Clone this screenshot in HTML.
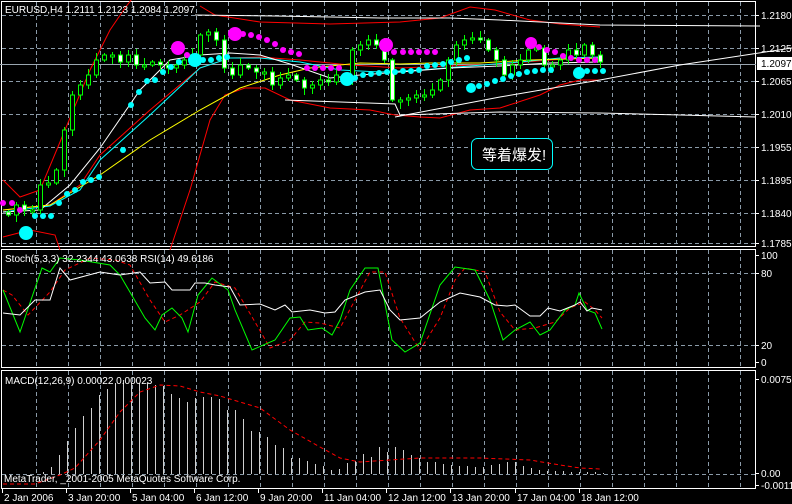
<!DOCTYPE html>
<html><head><meta charset="utf-8"><style>
html,body{margin:0;padding:0;background:#000;width:792px;height:504px;overflow:hidden}
svg{display:block}
text{font-family:"Liberation Sans","Noto Sans CJK SC",sans-serif;font-size:10px;fill:#fff}
</style></head><body>
<svg id="s" width="792" height="504" viewBox="0 0 792 504" xmlns="http://www.w3.org/2000/svg">
<rect width="792" height="504" fill="#000"/>
<g id="grid" stroke="#8a9aa8" stroke-width="1" stroke-dasharray="4,3"></g>
<g fill="none" stroke="#fff" stroke-width="1">
<rect x="1.5" y="1.5" width="754" height="245"/>
<rect x="1.5" y="249.5" width="754" height="118"/>
<rect x="1.5" y="370.5" width="754" height="118"/>
</g>
<line x1="0" y1="64.5" x2="756" y2="64.5" stroke="#9aa6b0"/>
<g fill="none" stroke="#f00" stroke-width="1">
<polyline points="3,180 20,197 40,190 65,130 90,70 110,30 125,8 135,-5"/>
<polyline points="200,6 215,15 260,22 330,24 400,22 440,18 470,7 495,10 530,20 560,24 600,27"/>
<polyline points="3,237 30,230 55,235 60,250"/>
<polyline points="170,250 190,190 210,120 225,95 245,88 265,88 290,100 330,108 370,110 395,115 420,117 440,118 470,110 500,108 540,95 560,85 580,80 600,80"/>
<polyline points="3,210 50,205 80,185 100,155 150,110 200,68 230,58 260,57 300,60 350,65 400,68 450,66 500,64 550,60 600,57"/>
</g>
<g fill="none" stroke-width="1">
<polyline stroke="#0ff" points="3,212 50,206 80,190 100,160 150,115 200,68 230,58 260,58 300,62 340,70 380,72 420,70 470,66 520,62 560,58 600,57"/>
<polyline stroke="#fff" points="3,212 40,210 70,185 100,148 140,90 170,60 200,55 230,53 260,55 290,64 330,78 360,75 400,72 450,68 500,66 550,63 600,62"/>
<polyline stroke="#ff0" points="3,210 50,205 100,175 150,140 200,110 240,88 280,75 310,68 360,63 400,64 430,63 480,63 530,60 600,58"/>
<polyline stroke="#fff" points="195,15 275,16 330,17 380,18 450,18 500,20 560,23 600,25 760,26"/>
<polyline stroke="#fff" points="285,100 395,104 400,115 500,112 600,113 680,115 756,117"/>
<polyline stroke="#fff" points="395,117 500,97 600,80 680,65 792,48"/>
</g>
<g id="candles"></g>
<g id="dots"></g>
<rect x="471.5" y="138.5" width="81" height="31" rx="6" fill="#000" stroke="#0ff"/>
<text x="482" y="160" style="font-size:15px">等着爆发!</text>
<g fill="none" stroke-width="1">
<polyline stroke="#f00" stroke-dasharray="4,3" points="3,290 12,295 28,315 50,292 65,270 90,258 115,260 130,265 150,300 165,322 180,315 200,302 215,282 235,288 255,322 270,348 290,340 305,322 320,323 340,328 355,300 370,272 385,272 400,318 420,350 440,318 455,280 465,268 485,272 500,312 515,330 535,328 555,322 570,308 585,302 595,310 602,318"/>
<polyline stroke="#0f0" points="3,290 20,332 42,268 50,272 60,258 80,260 110,265 120,275 145,318 155,330 162,315 172,308 182,318 188,332 198,295 212,278 228,290 235,310 252,350 275,340 290,318 300,317 308,330 322,328 332,335 340,320 350,290 365,268 378,268 392,340 405,352 420,343 440,285 455,267 475,270 490,300 503,340 515,330 530,322 540,335 550,330 565,310 575,305 579,293 587,310 595,313 602,329"/>
<polyline stroke="#fff" points="3,313 20,315 35,300 50,300 60,268 70,280 100,272 120,275 140,272 150,283 165,282 172,290 190,290 195,283 205,283 215,285 230,287 240,305 260,304 275,310 285,305 292,312 310,310 325,313 335,312 345,300 365,292 380,290 390,310 400,320 420,318 440,302 460,293 480,297 495,305 507,306 515,305 530,316 540,316 548,308 560,311 575,305 580,302 587,311 592,308 602,310"/>
</g>
<g id="macd" stroke="#d0d0d0" stroke-width="1"></g>
<polyline fill="none" stroke="#f00" stroke-dasharray="4,3" points="3,484 35,484 60,475 75,468 100,440 120,412 140,392 160,385 180,386 200,392 220,396 260,408 290,430 320,447 340,458 360,462 390,460 420,458 480,458 530,460 560,465 580,468 600,469"/>
<text x="5" y="13">EURUSD,H4  1.2111 1.2123 1.2084 1.2097</text>
<text x="5" y="262">Stoch(5,3,3) 32.2344 43.0638  RSI(14) 49.6186</text>
<text x="5" y="384">MACD(12,26,9) 0.00022 0.00023</text>
<text x="4" y="482">MetaTrader, _2001-2005 MetaQuotes Software Corp.</text>
<g id="rt"></g>
<rect x="757" y="57" width="35" height="13" fill="#fff"/>
<text x="761" y="67" style="fill:#000">1.2097</text>
<g id="dt"></g>
</svg>
<script>
var NS="http://www.w3.org/2000/svg";
function el(p,t,a){var e=document.createElementNS(NS,t);for(var k in a)e.setAttribute(k,a[k]);p.appendChild(e);return e;}
var g=document.getElementById('grid');
for(var k=1;k<=23;k++){var x=4+32*k+0.5;
 el(g,'line',{x1:x,y1:2,x2:x,y2:246});el(g,'line',{x1:x,y1:250,x2:x,y2:367});el(g,'line',{x1:x,y1:371,x2:x,y2:488});}
[15.5,48.5,81.5,114.5,147.5,180.5,213.5,243.5].forEach(function(y){el(g,'line',{x1:2,y1:y,x2:755,y2:y});});
[273.5,345.5].forEach(function(y){el(g,'line',{x1:2,y1:y,x2:755,y2:y});});
el(g,'line',{x1:2,y1:474.5,x2:755,y2:474.5});
var rt=document.getElementById('rt');
[["1.2180",19],["1.2125",52],["1.2065",85],["1.2010",118],["1.1955",151],["1.1895",184],["1.1840",217],["1.1785",247],["100",259],["80",277],["20",349],["0",366],["0.00752",383],["0.00",477],["-0.00119",489]].forEach(function(a){
 var t=el(rt,'text',{x:761,y:a[1]});t.textContent=a[0];el(rt,'line',{x1:756,y1:a[1]-3.5,x2:759,y2:a[1]-3.5,stroke:'#fff'});});
var dt=document.getElementById('dt');
[["2 Jan 2006",2],["3 Jan 20:00",66],["5 Jan 04:00",130],["6 Jan 12:00",194],["9 Jan 20:00",258],["11 Jan 04:00",322],["12 Jan 12:00",386],["13 Jan 20:00",450],["17 Jan 04:00",515],["18 Jan 12:00",579]].forEach(function(a){
 var t=el(dt,'text',{x:a[1]+2,y:501});t.textContent=a[0];el(dt,'line',{x1:a[1]+0.5,y1:489,x2:a[1]+0.5,y2:493,stroke:'#fff'});});
var C=[215,205,210,210,185,183,170,130,95,85,75,60,55,55,62,55,65,65,62,65,68,65,60,55,35,32,40,68,75,65,68,72,72,85,78,75,80,88,85,80,82,75,78,50,45,40,45,60,100,100,98,95,95,90,80,60,45,40,38,40,50,60,75,65,60,50,48,65,65,60,50,55,45,55,62];
var cg=document.getElementById('candles');var prev=212;
for(var i=0;i<C.length;i++){var x=8*(i+1),o=prev,c=C[i];var t=Math.min(o,c),b=Math.max(o,c);if(b-t<2)b=t+2;
 var w1=2+((i*7)%6),w2=2+((i*5)%6);
 el(cg,'line',{x1:x+0.5,y1:t-w1,x2:x+0.5,y2:b+w2,stroke:'#0f0'});
 el(cg,'rect',{x:x-1.5,y:t,width:4,height:b-t,fill:(c>o?'#fff':'#000'),stroke:'#0f0','stroke-width':1});prev=c;}
var dg=document.getElementById('dots');
function dots(col,pts){pts.forEach(function(p){el(dg,'circle',{cx:p[0],cy:p[1],r:p[2]||3,fill:col});});}
dots('#0ff',[[26,233,7],[35,216],[43,216],[51,216],[59,203],[67,194],[75,190],[83,182],[91,180],[99,177],[123,150],[131,105],[139,92],[147,81],[155,80],[163,72],[171,67],[179,62],[195,60,7],[203,60],[211,60],[219,58],[227,57],[347,79,7],[355,78],[363,75],[371,74],[379,73],[387,72],[395,72],[403,71],[411,71],[419,70],[427,66],[435,65],[443,64],[451,62],[459,60],[467,58],[471,88,5],[479,86],[487,84],[495,81],[503,79],[511,76],[519,74],[527,72],[535,71],[543,70],[551,70],[579,73,6],[587,71],[595,71],[603,71]]);
dots('#f0f',[[3,203],[12,203],[20,210],[178,48,7],[187,55],[235,34,7],[243,34],[251,35],[259,37],[267,40],[275,44],[283,50],[291,52],[299,54],[307,68],[315,68],[323,68],[331,68],[339,68],[386,45,7],[394,52],[403,52],[411,52],[419,52],[427,52],[435,52],[531,43,6],[539,47],[547,50],[555,52],[563,56],[571,58],[579,60],[587,60],[595,60]]);
var M=[[43,472],[51,467],[59,455],[67,441],[75,428],[83,416],[91,408],[99,395],[107,389],[115,383],[123,380],[131,383],[139,383],[147,383],[155,385],[163,386],[171,394],[179,398],[187,402],[195,398],[203,397],[211,397],[219,399],[227,410],[235,410],[243,419],[251,431],[259,432],[267,437],[275,445],[283,448],[291,458],[299,458],[307,461],[315,464],[323,466],[331,470],[339,469],[347,463],[355,461],[363,454],[371,457],[379,447],[387,452],[395,447],[403,450],[411,455],[419,458],[427,462],[435,462],[443,464],[451,465],[459,466],[467,466],[475,467],[483,467],[491,465],[499,464],[507,462],[515,462],[523,466],[531,468],[539,470],[547,471],[555,471],[563,471],[571,472],[579,472],[587,472],[595,472],[603,473]];
var mg=document.getElementById('macd');M.forEach(function(p){el(mg,'line',{x1:p[0]+0.5,y1:p[1],x2:p[0]+0.5,y2:474});});
</script>
</body></html>
